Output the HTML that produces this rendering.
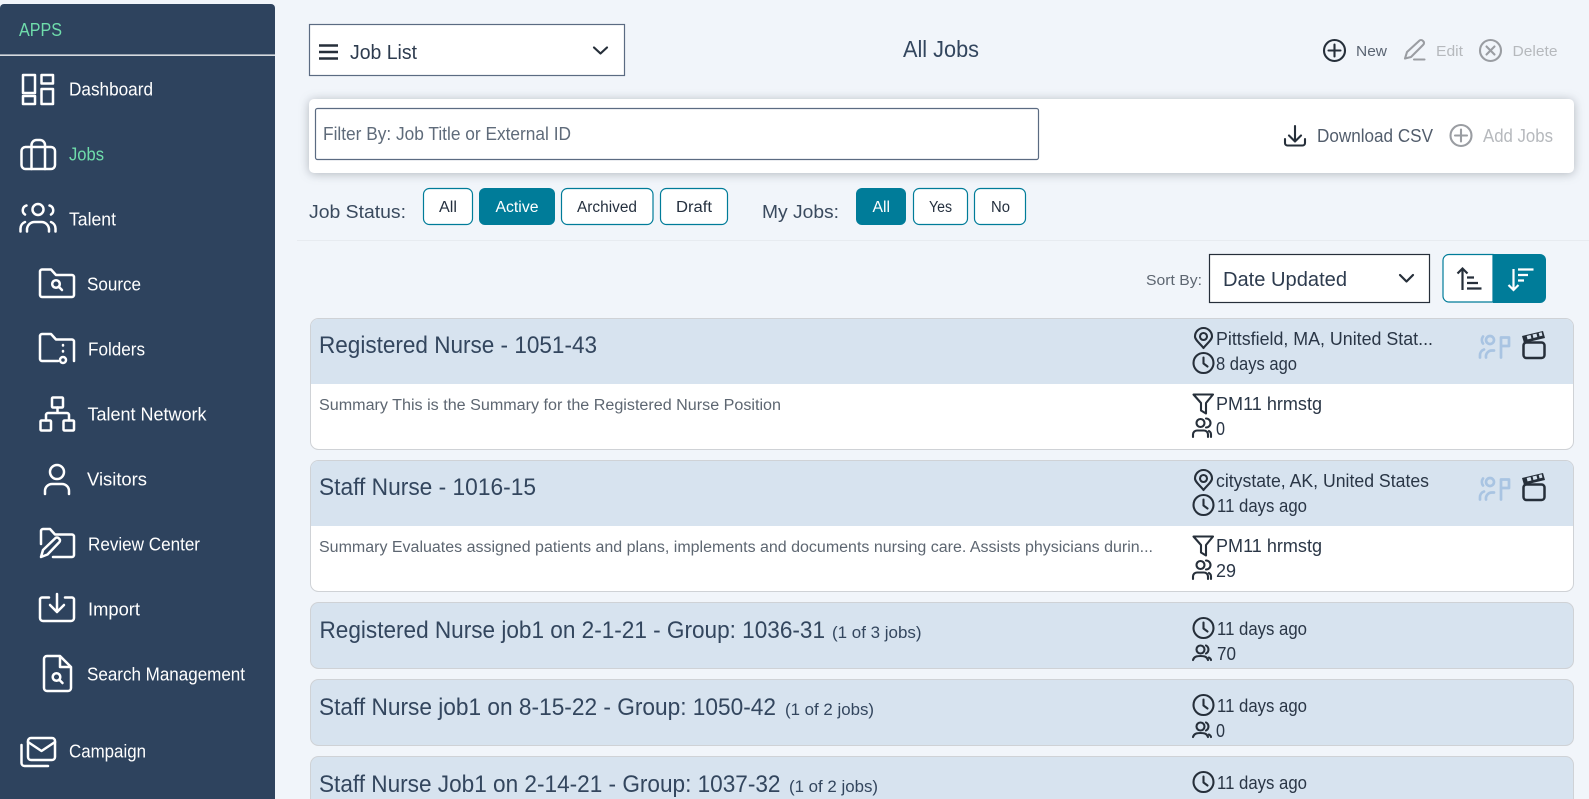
<!DOCTYPE html>
<html lang="en"><head><meta charset="utf-8"><title>All Jobs</title>
<style>
html,body{margin:0;padding:0;width:1589px;height:799px;overflow:hidden;background:#f1f5fa}
svg{display:block}
text{font-family:"Liberation Sans",sans-serif;fill:#2d3b4e;white-space:pre}
.n{font-size:18px;fill:#fff}
.i{fill:none;stroke:#fff;stroke-width:2.5;stroke-linecap:round;stroke-linejoin:round}
.d{fill:none;stroke:#262f3a;stroke-width:2.1;stroke-linecap:round;stroke-linejoin:round}
.g{fill:none;stroke:#9a9da2;stroke-width:2.1;stroke-linecap:round;stroke-linejoin:round}
.b{fill:#fff;stroke:#007c99;stroke-width:1.2}
.t{font-size:24px;fill:#33465e}
.s{font-size:17px;fill:#33465e}
.r{font-size:18px;fill:#2a3646}
.m{font-size:15.500px;fill:#5d6671}
.bt{font-size:15.500px;fill:#25303f}
</style></head><body>
<svg width="1589" height="799" viewBox="0 0 1589 799" xmlns="http://www.w3.org/2000/svg">
<defs>
<g id="pin" class="d"><path d="M0 10C-3 6-8.500 2-8.500-1.500a8.500 8.500 0 0 1 17 0C8.500 2 3 6 0 10Z"/><circle cx="0" cy="-1.500" r="3.500"/></g>
<g id="clock" class="d"><circle r="10"/><path d="M0-5.500V0.500L4 3.500"/></g>
<g id="funnel" class="d"><path d="M-9.500-9H10L3-.5V10L-2 7V-.5Z"/></g>
<g id="users" class="d"><circle cx="-2.500" cy="-5" r="4"/><path d="M-10 9V6.500A4 4 0 0 1-6 2.500H1A4 4 0 0 1 5 6.500V9M3-9.500A4.500 4.500 0 0 1 3-.5M8 9V6.500A4 4 0 0 0 6 3"/></g>
<g id="users2" class="d"><circle cx="-2.500" cy="-3.500" r="4"/><path d="M-10 7C-9 3.500-6 3-2.500 3S4 3.500 5 7M3-7.500A4.500 4.500 0 0 1 3 .5M8 7A4 4 0 0 0 6 4.500"/></g>
<g id="flag" fill="none" stroke="#a9c4e2" stroke-width="2.700" stroke-linecap="round" stroke-linejoin="round"><circle cx="1490" cy="340" r="4"/><path d="M1483 336.500a6 6 0 0 0 0 7M1480 357.500v-2a6 6 0 0 1 4-6M1486 357.500a6 6 0 0 1 6-7h2"/><path d="M1501 357.500V337.500H1509V346H1501"/></g>
<g id="clap"><rect x="1523.500" y="342.500" width="21" height="15.500" rx="3" fill="none" stroke="#262f3a" stroke-width="2.500"/><path d="M1522 336L1543 331 1545 338 1524 343Z" fill="#262f3a"/><g fill="#d7e3ef"><rect x="1527" y="335.500" width="4" height="3.500" transform="rotate(-14 1529 337)"/><rect x="1533" y="334" width="4" height="3.500" transform="rotate(-14 1535 336)"/><rect x="1539" y="332.700" width="3" height="3.500" transform="rotate(-14 1540 334)"/></g></g>
<g id="mag" fill="none" stroke="#fff" stroke-width="2.500" stroke-linecap="round"><circle r="3.800"/><path d="M2.800 2.800L6 6"/></g>
</defs>

<rect width="1589" height="799" fill="#f1f5fa"/>

<!-- Sidebar -->
<path d="M0 8a4 4 0 0 1 4-4H271a4 4 0 0 1 4 4V799H0Z" fill="#2e435e"/>
<rect x="0" y="54.500" width="275" height="1.300" fill="#fff"/>
<text x="19" y="36" font-size="18" style="fill:#6fdcab" textLength="43" lengthAdjust="spacingAndGlyphs">APPS</text>

<g class="i">
<rect x="23" y="75" width="12" height="18"/><rect x="41.500" y="75" width="11.500" height="8.500"/><rect x="23" y="96" width="12" height="8"/><rect x="41.500" y="89" width="11.500" height="15"/>
<rect x="21.500" y="147" width="33.500" height="22" rx="4"/><path d="M31.500 169V145a5 5 0 0 1 5-5h3.500a5 5 0 0 1 5 5V169"/>
<circle cx="38" cy="209.500" r="5.500"/><path d="M27 231.500v-2a7.500 7.500 0 0 1 7.500-7.500h7a7.500 7.500 0 0 1 7.500 7.500v2M26.500 205.500a5 5 0 0 0-1.500 9M49.500 205.500a5 5 0 0 1 1.500 9M20.500 231.500v-3a7 7 0 0 1 4.500-6.500M55.500 231.500v-3a7 7 0 0 0-4.500-6.500"/>
<path d="M40 294V271.500a2 2 0 0 1 2-2h9l5 5.500h16a2 2 0 0 1 2 2V295a2 2 0 0 1-2 2H42a2 2 0 0 1-2-2Z"/>
<path d="M58 361H42a2 2 0 0 1-2-2V336a2 2 0 0 1 2-2h9l5 5.500h16a2 2 0 0 1 2 2V361M63 345v.5M63 351v.5"/><circle cx="63" cy="360" r="3"/>
<rect x="52" y="397.500" width="11" height="10" rx="1"/><rect x="40.500" y="420.500" width="10.500" height="10" rx="1"/><rect x="63.500" y="420.500" width="10.500" height="10" rx="1"/><path d="M57.500 407.500V413M46 420.500V415a2 2 0 0 1 2-2H67a2 2 0 0 1 2 2V420.500"/>
<circle cx="57" cy="472" r="7"/><path d="M45 494v-3a7 7 0 0 1 7-7h10a7 7 0 0 1 7 7v3"/>
<path d="M41 544V531a2 2 0 0 1 2-2h7l5 5.500h17a2 2 0 0 1 2 2V555a2 2 0 0 1-2 2H53"/><path d="M41 557L43 550 55 538.500a2.500 2.500 0 0 1 4 0 2.500 2.500 0 0 1 0 4L47.500 554.500Z"/>
<path d="M49 597.500H42a2 2 0 0 0-2 2V618a3 3 0 0 0 3 3H71a3 3 0 0 0 3-3V599.500a2 2 0 0 0-2-2H65M57 594V612M50 605L57 612 64 605"/>
<path d="M44 659a3 3 0 0 1 3-3H60L71 667V688a3 3 0 0 1-3 3H47a3 3 0 0 1-3-3ZM60 656V667H71"/>
<rect x="28" y="738" width="27" height="22" rx="3"/><path d="M28 742L41.500 751 55 742M21.500 745V763a3 3 0 0 0 3 3H48"/>
</g>
<use href="#mag" x="56" y="284"/><use href="#mag" x="56.500" y="677"/>

<text class="n" x="69" y="95.500" textLength="84" lengthAdjust="spacingAndGlyphs">Dashboard</text>
<text class="n" x="69" y="160.500" style="fill:#6fdcab" textLength="35" lengthAdjust="spacingAndGlyphs">Jobs</text>
<text class="n" x="69" y="225.500" textLength="47" lengthAdjust="spacingAndGlyphs">Talent</text>
<text class="n" x="87" y="290.500" textLength="54" lengthAdjust="spacingAndGlyphs">Source</text>
<text class="n" x="88" y="355.500" textLength="57" lengthAdjust="spacingAndGlyphs">Folders</text>
<text class="n" x="87.500" y="420.500" textLength="119" lengthAdjust="spacingAndGlyphs">Talent Network</text>
<text class="n" x="87" y="485.500" textLength="60" lengthAdjust="spacingAndGlyphs">Visitors</text>
<text class="n" x="88" y="550.500" textLength="112" lengthAdjust="spacingAndGlyphs">Review Center</text>
<text class="n" x="88" y="615.500" textLength="52" lengthAdjust="spacingAndGlyphs">Import</text>
<text class="n" x="87" y="680.500" textLength="158" lengthAdjust="spacingAndGlyphs">Search Management</text>
<text class="n" x="69" y="757.500" textLength="77" lengthAdjust="spacingAndGlyphs">Campaign</text>

<!-- Top bar -->
<rect x="309.500" y="24.500" width="315" height="51" fill="#fff" stroke="#5b6b82" stroke-width="1.200"/>
<path d="M319 45.500H338M319 52H338M319 58.500H338" stroke="#262f3a" stroke-width="2.500" fill="none"/>
<text x="350" y="59" font-size="20" style="fill:#2d3b4e" textLength="67" lengthAdjust="spacingAndGlyphs">Job List</text>
<path d="M594 47.500L600.500 53.500 607 47.500" fill="none" stroke="#262f3a" stroke-width="2.200" stroke-linecap="round" stroke-linejoin="round"/>
<text x="903" y="57" font-size="23" style="fill:#33465e" textLength="76" lengthAdjust="spacingAndGlyphs">All Jobs</text>

<g class="d"><circle cx="1334.500" cy="50.500" r="10.500"/><path d="M1334.500 44.500V56.500M1328.500 50.500H1340.500"/></g>
<text x="1356" y="56" font-size="15" style="fill:#5a6472" textLength="31" lengthAdjust="spacingAndGlyphs">New</text>
<g class="g"><path d="M1405 58.500L1407 52 1419 41a2.500 2.500 0 0 1 4 0 2.500 2.500 0 0 1 0 4L1411 57Z M1414 59.500H1424.500"/></g>
<text x="1436" y="56" font-size="15" style="fill:#b6b9bd" textLength="27" lengthAdjust="spacingAndGlyphs">Edit</text>
<g class="g"><circle cx="1490.500" cy="50.500" r="10.500"/><path d="M1486.500 46.500L1494.500 54.500M1494.500 46.500L1486.500 54.500"/></g>
<text x="1512.500" y="56" font-size="15" style="fill:#b6b9bd" textLength="45" lengthAdjust="spacingAndGlyphs">Delete</text>

<!-- Filter panel -->
<rect x="309" y="99" width="1265" height="74" rx="5" fill="#fff" style="filter:drop-shadow(0 1px 5px rgba(60,70,80,.35))"/>
<rect x="315.500" y="108.500" width="723" height="51" rx="2" fill="#fff" stroke="#5b6b82" stroke-width="1.200"/>
<text x="323" y="140" font-size="18" style="fill:#5f6b7a" textLength="248" lengthAdjust="spacingAndGlyphs">Filter By: Job Title or External ID</text>
<g class="d"><path d="M1295 126V141M1289 135.500L1295 141.500 1301 135.500M1285 139V143a2.500 2.500 0 0 0 2.500 2.500H1302.500A2.500 2.500 0 0 0 1305 143V139"/></g>
<text x="1317" y="142" font-size="18" style="fill:#525d6c" textLength="116" lengthAdjust="spacingAndGlyphs">Download CSV</text>
<g class="g"><circle cx="1461" cy="135.500" r="10.500"/><path d="M1461 129.500V141.500M1455 135.500H1467"/></g>
<text x="1483" y="142" font-size="18" style="fill:#b6b9bd" textLength="70" lengthAdjust="spacingAndGlyphs">Add Jobs</text>

<!-- Status -->
<text x="309" y="218" font-size="18" style="fill:#3a4a5e" textLength="97" lengthAdjust="spacingAndGlyphs">Job Status:</text>
<rect class="b" x="423.500" y="188.500" width="49" height="36" rx="6"/>
<text class="bt" x="439" y="212" textLength="18" lengthAdjust="spacingAndGlyphs">All</text>
<rect x="479" y="188" width="76" height="37" rx="6" fill="#007c99"/>
<text class="bt" x="495.500" y="212" style="fill:#fff" textLength="43" lengthAdjust="spacingAndGlyphs">Active</text>
<rect class="b" x="561.500" y="188.500" width="91.500" height="36" rx="6"/>
<text class="bt" x="577" y="212" textLength="60" lengthAdjust="spacingAndGlyphs">Archived</text>
<rect class="b" x="660.500" y="188.500" width="67" height="36" rx="6"/>
<text class="bt" x="676" y="212" textLength="36" lengthAdjust="spacingAndGlyphs">Draft</text>
<text x="762" y="218" font-size="18" style="fill:#3a4a5e" textLength="77" lengthAdjust="spacingAndGlyphs">My Jobs:</text>
<rect x="856" y="188" width="50" height="37" rx="6" fill="#007c99"/>
<text class="bt" x="872.500" y="212" style="fill:#fff" textLength="17.500" lengthAdjust="spacingAndGlyphs">All</text>
<rect class="b" x="913.500" y="188.500" width="54" height="36" rx="6"/>
<text class="bt" x="929" y="212" textLength="23" lengthAdjust="spacingAndGlyphs">Yes</text>
<rect class="b" x="974.500" y="188.500" width="51" height="36" rx="6"/>
<text class="bt" x="991" y="212" textLength="19" lengthAdjust="spacingAndGlyphs">No</text>
<rect x="297" y="240" width="1292" height="1" fill="#e7ebf0"/>

<!-- Sort -->
<text x="1146" y="285" font-size="15" style="fill:#5d6671" textLength="56" lengthAdjust="spacingAndGlyphs">Sort By:</text>
<rect x="1209.500" y="254.500" width="220" height="48" fill="#fff" stroke="#262f3a" stroke-width="1.200"/>
<text x="1223" y="286" font-size="20" style="fill:#2d3b4e" textLength="124" lengthAdjust="spacingAndGlyphs">Date Updated</text>
<path d="M1400 275L1406.500 281.500 1413 275" fill="none" stroke="#262f3a" stroke-width="2.200" stroke-linecap="round" stroke-linejoin="round"/>
<path d="M1493 254.500H1449a6 6 0 0 0-6 6V296a6 6 0 0 0 6 6H1493Z" fill="#fff" stroke="#007c99" stroke-width="1.200"/>
<path d="M1493 254H1540a6 6 0 0 1 6 6V297a6 6 0 0 1-6 6H1493Z" fill="#007c99"/>
<path d="M1462.500 290V268.500M1457.500 273.500L1462.500 268.500 1467.500 273.500M1467 277.500H1474M1467 283H1478M1467 288.500H1481.500" fill="none" stroke="#262f3a" stroke-width="2.200"/>
<path d="M1513.500 269V290M1508.500 285L1513.500 290 1518.500 285M1518 269.500H1533.500M1518 275H1528M1518 280.500H1524" fill="none" stroke="#fff" stroke-width="2.200"/>

<!-- Card 1 -->
<rect x="310.500" y="318.500" width="1263" height="131" rx="8" fill="#fff" stroke="#cfd2d6"/>
<path d="M311 384V326a7 7 0 0 1 7-7H1566a7 7 0 0 1 7 7V384Z" fill="#d7e3ef"/>
<text class="t" x="319" y="353" textLength="278" lengthAdjust="spacingAndGlyphs">Registered Nurse - 1051-43</text>
<text class="m" x="319" y="410" textLength="462" lengthAdjust="spacingAndGlyphs">Summary This is the Summary for the Registered Nurse Position</text>
<use href="#pin" x="1203.500" y="338"/><use href="#clock" x="1203.500" y="363"/><use href="#funnel" x="1203" y="403.500"/><use href="#users" x="1203" y="428"/>
<text class="r" x="1216" y="345" textLength="217" lengthAdjust="spacingAndGlyphs">Pittsfield, MA, United Stat...</text>
<text class="r" x="1216" y="370" textLength="81" lengthAdjust="spacingAndGlyphs">8 days ago</text>
<text class="r" x="1216" y="410" textLength="106" lengthAdjust="spacingAndGlyphs">PM11 hrmstg</text>
<text class="r" x="1216" y="435" textLength="9" lengthAdjust="spacingAndGlyphs">0</text>
<use href="#flag"/><use href="#clap"/>

<!-- Card 2 -->
<rect x="310.500" y="460.500" width="1263" height="131" rx="8" fill="#fff" stroke="#cfd2d6"/>
<path d="M311 526V468a7 7 0 0 1 7-7H1566a7 7 0 0 1 7 7V526Z" fill="#d7e3ef"/>
<text class="t" x="319" y="495" textLength="217" lengthAdjust="spacingAndGlyphs">Staff Nurse - 1016-15</text>
<text class="m" x="319" y="552" textLength="834" lengthAdjust="spacingAndGlyphs">Summary Evaluates assigned patients and plans, implements and documents nursing care. Assists physicians durin...</text>
<use href="#pin" x="1203.500" y="480"/><use href="#clock" x="1203.500" y="505"/><use href="#funnel" x="1203" y="545.500"/><use href="#users" x="1203" y="570"/>
<text class="r" x="1216" y="487" textLength="213" lengthAdjust="spacingAndGlyphs">citystate, AK, United States</text>
<text class="r" x="1217" y="512" textLength="90" lengthAdjust="spacingAndGlyphs">11 days ago</text>
<text class="r" x="1216" y="552" textLength="106" lengthAdjust="spacingAndGlyphs">PM11 hrmstg</text>
<text class="r" x="1216" y="577" textLength="20" lengthAdjust="spacingAndGlyphs">29</text>
<use href="#flag" y="142"/><use href="#clap" y="142"/>

<!-- Card 3 -->
<rect x="310.500" y="602.500" width="1263" height="66" rx="8" fill="#d7e3ef" stroke="#cfd2d6"/>
<text class="t" x="319.500" y="638" textLength="505.500" lengthAdjust="spacingAndGlyphs">Registered Nurse job1 on 2-1-21 - Group: 1036-31</text>
<text class="s" x="832" y="638" textLength="89.500" lengthAdjust="spacingAndGlyphs">(1 of 3 jobs)</text>
<use href="#clock" x="1203.500" y="628"/><use href="#users2" x="1203" y="653"/>
<text class="r" x="1217" y="635" textLength="90" lengthAdjust="spacingAndGlyphs">11 days ago</text>
<text class="r" x="1217" y="660" textLength="19" lengthAdjust="spacingAndGlyphs">70</text>

<!-- Card 4 -->
<rect x="310.500" y="679.500" width="1263" height="66" rx="8" fill="#d7e3ef" stroke="#cfd2d6"/>
<text class="t" x="319" y="715" textLength="457" lengthAdjust="spacingAndGlyphs">Staff Nurse job1 on 8-15-22 - Group: 1050-42</text>
<text class="s" x="785" y="715" textLength="89" lengthAdjust="spacingAndGlyphs">(1 of 2 jobs)</text>
<use href="#clock" x="1203.500" y="705"/><use href="#users2" x="1203" y="730"/>
<text class="r" x="1217" y="712" textLength="90" lengthAdjust="spacingAndGlyphs">11 days ago</text>
<text class="r" x="1216" y="737" textLength="9" lengthAdjust="spacingAndGlyphs">0</text>

<!-- Card 5 -->
<rect x="310.500" y="756.500" width="1263" height="70" rx="8" fill="#d7e3ef" stroke="#cfd2d6"/>
<text class="t" x="319" y="792" textLength="461.500" lengthAdjust="spacingAndGlyphs">Staff Nurse Job1 on 2-14-21 - Group: 1037-32</text>
<text class="s" x="789" y="792" textLength="89" lengthAdjust="spacingAndGlyphs">(1 of 2 jobs)</text>
<use href="#clock" x="1203.500" y="782"/>
<text class="r" x="1217" y="789" textLength="90" lengthAdjust="spacingAndGlyphs">11 days ago</text>
</svg>
</body></html>
